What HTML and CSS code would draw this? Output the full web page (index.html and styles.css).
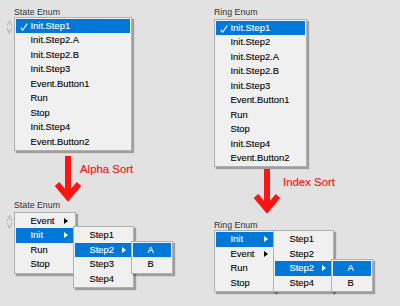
FILE: index.html
```html
<!DOCTYPE html>
<html lang="en">
<head>
    <meta charset="UTF-8">
    <title>Enum sort order</title>
    <link rel="stylesheet" href="styles.css">
</head>
<body>
    <div class="page">
        <section class="col col-state">
            <div class="caption caption-top">State Enum</div>
            <div class="ctrl">
                <svg class="spin" width="7" height="14" viewBox="0 0 7 14">
                    <path d="M1 6 L3.5 1 L6 6" fill="none" stroke="#b8b8b8" stroke-width="1.2"/>
                    <path d="M1 8 L3.5 13 L6 8" fill="none" stroke="#b8b8b8" stroke-width="1.2"/>
                </svg>
                <ul class="menu menu-flat menu-state">
                    <li class="item sel">
                        <svg class="check" width="8" height="8" viewBox="0 0 8 8">
                            <path d="M0.8 4.6 L2.6 7.2 L7.2 0.6" fill="none" stroke="#fff" stroke-width="1.1"/>
                        </svg>Init.Step1
                    </li>
                    <li class="item">Init.Step2.A</li>
                    <li class="item">Init.Step2.B</li>
                    <li class="item">Init.Step3</li>
                    <li class="item">Event.Button1</li>
                    <li class="item">Run</li>
                    <li class="item">Stop</li>
                    <li class="item">Init.Step4</li>
                    <li class="item">Event.Button2</li>
                </ul>
            </div>

            <div class="sort sort-alpha">
                <svg class="arrow" width="28" height="50" viewBox="0 0 28 50">
                    <path d="M15 2 V42" stroke="#ff1414" stroke-width="6"/>
                    <polyline points="4,30 15,43 26,30" fill="none" stroke="#ff1414" stroke-width="6"/>
                </svg>
                <span class="sort-text">Alpha Sort</span>
            </div>

            <div class="caption caption-low">State Enum</div>
            <div class="ctrl">
                <svg class="spin" width="7" height="14" viewBox="0 0 7 14">
                    <path d="M1 6 L3.5 1 L6 6" fill="none" stroke="#b8b8b8" stroke-width="1.2"/>
                    <path d="M1 8 L3.5 13 L6 8" fill="none" stroke="#b8b8b8" stroke-width="1.2"/>
                </svg>
                <ul class="menu menu-tree">
                    <li class="item">Event<i class="tri"></i></li>
                    <li class="item sel">Init<i class="tri"></i>
                        <ul class="menu submenu">
                            <li class="item">Step1</li>
                            <li class="item sel">Step2<i class="tri"></i>
                                <ul class="menu submenu submenu-leaf">
                                    <li class="item sel">A</li>
                                    <li class="item">B</li>
                                </ul>
                            </li>
                            <li class="item">Step3</li>
                            <li class="item">Step4</li>
                        </ul>
                    </li>
                    <li class="item">Run</li>
                    <li class="item">Stop</li>
                </ul>
            </div>
        </section>

        <section class="col col-ring">
            <div class="caption caption-top">Ring Enum</div>
            <ul class="menu menu-flat menu-ring">
                <li class="item sel">
                    <svg class="check" width="8" height="8" viewBox="0 0 8 8">
                        <path d="M0.8 4.6 L2.6 7.2 L7.2 0.6" fill="none" stroke="#fff" stroke-width="1.1"/>
                    </svg>Init.Step1
                </li>
                <li class="item">Init.Step2</li>
                <li class="item">Init.Step2.A</li>
                <li class="item">Init.Step2.B</li>
                <li class="item">Init.Step3</li>
                <li class="item">Event.Button1</li>
                <li class="item">Run</li>
                <li class="item">Stop</li>
                <li class="item">Init.Step4</li>
                <li class="item">Event.Button2</li>
            </ul>

            <div class="sort sort-index">
                <svg class="arrow" width="28" height="47" viewBox="0 0 28 47">
                    <path d="M15 0 V39" stroke="#ff1414" stroke-width="6"/>
                    <polyline points="4,27 15,40 26,27" fill="none" stroke="#ff1414" stroke-width="6"/>
                </svg>
                <span class="sort-text">Index Sort</span>
            </div>

            <div class="caption caption-low">Ring Enum</div>
            <ul class="menu menu-tree">
                <li class="item sel">Init<i class="tri"></i>
                    <ul class="menu submenu submenu-top">
                        <li class="item">Step1</li>
                        <li class="item">Step2</li>
                        <li class="item sel">Step2<i class="tri"></i>
                            <ul class="menu submenu submenu-leaf">
                                <li class="item sel">A</li>
                                <li class="item">B</li>
                            </ul>
                        </li>
                        <li class="item">Step4</li>
                    </ul>
                </li>
                <li class="item">Event<i class="tri"></i></li>
                <li class="item">Run</li>
                <li class="item">Stop</li>
            </ul>
        </section>
    </div>
</body>
</html>
```

FILE: styles.css
```css
html, body {
    margin: 0;
    padding: 0;
}

body {
    width: 400px;
    height: 306px;
    overflow: hidden;
    background: #e2e2e2;
    font-family: "Liberation Sans", Arial, sans-serif;
    color: #000;
}

.page {
    display: grid;
    grid-template-columns: 200px 200px;
}

.col {
    display: flex;
    flex-direction: column;
    align-items: flex-start;
}

.col-state {
    padding-left: 6px;
}

.col-ring {
    padding-left: 14px;
}

.caption {
    font-size: 8.8px;
    line-height: 10px;
    color: #333;
}

.col-state .caption {
    margin-left: 8px;
}

.caption-top {
    margin-top: 7px;
}

.col-ring .caption-top + .menu {
    margin-top: 2px;
}

.ctrl {
    display: flex;
    align-items: flex-start;
    gap: 1px;
}

.spin {
    margin-top: 3px;
}

/* popup menus */
.menu {
    list-style: none;
    margin: 0;
    padding: 1px;
    background: #f0f0f0;
    border: 1px solid #b0b0b0;
    box-shadow: 2px 2px 1px rgba(0, 0, 0, 0.3);
    box-sizing: border-box;
}

.item {
    position: relative;
    height: 14.45px;
    line-height: 14.45px;
    padding-left: 14.5px;
    font-size: 9.4px;
    white-space: nowrap;
    color: #000;
    -webkit-text-stroke: 0.1px currentColor;
}

.item.sel {
    background: #0078d7;
    color: #fff;
}

.check {
    position: absolute;
    left: 4px;
    top: 4px;
}

.menu-state {
    width: 118px;
}

.menu-ring {
    width: 93px;
}

.menu-tree {
    width: 62px;
    position: relative;
}

.submenu {
    position: absolute;
    left: calc(100% - 1px);
    top: -2px;
    width: 61px;
    z-index: 1;
}

.submenu-leaf {
    width: 42px;
    z-index: 2;
}

.tri {
    position: absolute;
    right: 6px;
    top: 4px;
    width: 0;
    height: 0;
    border-left: 4px solid #000;
    border-top: 3.5px solid transparent;
    border-bottom: 3.5px solid transparent;
}

.sel > .tri {
    border-left-color: #fff;
}

/* red arrows between the two states */
.sort {
    display: flex;
    align-items: flex-start;
}

.arrow {
    overflow: visible;
    flex: none;
}

.sort-alpha {
    margin-top: 3px;
    padding-left: 47px;
    height: 46px;
}

.sort-index {
    margin-top: 2px;
    padding-left: 38px;
    height: 51px;
}

.sort-text {
    font-size: 11.4px;
    line-height: 14px;
    color: #f01818;
    margin-top: 8px;
    margin-left: -1px;
    -webkit-text-stroke: 0.2px currentColor;
}

.sort-index .sort-text {
    margin-left: 3px;
    margin-top: 6px;
}

.caption-low {
    margin-bottom: 2px;
}

.col-ring .caption-low {
    margin-bottom: 0;
}
```
